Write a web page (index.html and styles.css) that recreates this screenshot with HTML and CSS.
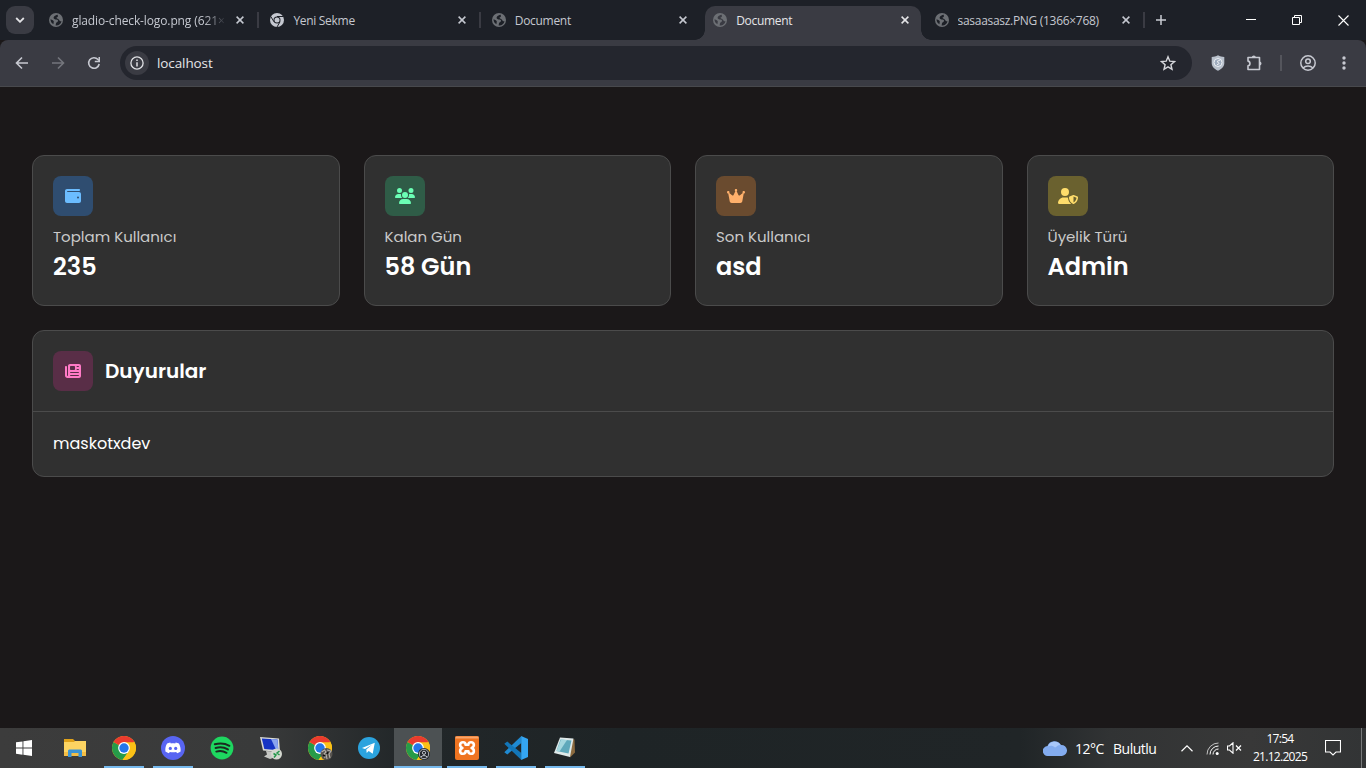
FILE: index.html
```html
<!DOCTYPE html>
<html lang="tr">
<head>
    <meta charset="UTF-8">
    <meta name="viewport" content="width=device-width, initial-scale=1.0">
    <title>Document</title>
    <link rel="stylesheet" href="styles.css">
</head>
<body>
    <svg class="defs" width="0" height="0">
        <symbol id="globe" viewBox="0 0 14 14">
            <circle cx="7" cy="7" r="7" fill="#6c6f74"/>
            <path d="M8.800 1.800C7 2 4.800 3 4.600 4.600c-.2 1.600 1.400 2 2.800 2 1.400.1 1.800.8 1.500 1.700-.3.900-1.500.9-1.900 1.900l-.4 2.200c3 .4 5.400-1.500 5.900-4.200-.9.200-1.900-.1-2.400-1.200-.4-1-1.300-1.200-2-1.500C7 5 7.600 4 8.800 4z" fill="var(--hole)"/>
            <path d="M1.500 6.300l2.300.9c1 .5 1.200 1.200.9 2.100l-.3 1.900C2.500 10.300 1.500 8.500 1.500 6.300z" fill="var(--hole)"/>
        </symbol>
        <symbol id="close" viewBox="0 0 8 8"><path d="M.6.6l6.800 6.800M7.400.6L.6 7.400" stroke="currentColor" stroke-width="1.500"/></symbol>
        <symbol id="chrome" viewBox="0 0 24 24">
            <circle cx="12" cy="12" r="12" fill="#fbc116"/>
            <path d="M12 12L1.600 6A12 12 0 0 0 10.500 23.900L17.200 15z" fill="#269b49"/>
            <path d="M12 12L1.600 6A12 12 0 0 1 22.400 6z" fill="#ea3b2e"/>
            <path d="M12 6.300h10.500A12 12 0 0 1 10.500 23.900l6.400-9z" fill="#fbc116"/>
            <circle cx="12" cy="12" r="5.900" fill="#fff"/>
            <circle cx="12" cy="12" r="4.700" fill="#2476ea"/>
        </symbol>
    </svg>

    <div class="tabs">
        <div class="tab-search"><svg width="10" height="6" viewBox="0 0 10 6"><path d="M1.200 1l3.800 3.800L8.800 1" fill="none" stroke="#e3e3e6" stroke-width="1.800"/></svg></div>
        <div class="tab">
            <svg class="favicon"><use href="#globe"/></svg>
            <span class="tab-title fade">gladio-check-logo.png (621×</span>
            <svg class="close"><use href="#close"/></svg>
        </div>
        <div class="tab">
            <svg class="favicon" viewBox="0 0 14 14"><circle cx="7" cy="7" r="7" fill="#c5c8d0"/><path d="M7 3.500h6.200M4 8.800L.8 3.500M10 8.800L7 14" stroke="#1d2027" stroke-width="1"/><circle cx="7" cy="7" r="3.500" fill="#1d2027"/><circle cx="7" cy="7" r="2.500" fill="#c5c8d0"/></svg>
            <span class="tab-title">Yeni Sekme</span>
            <svg class="close"><use href="#close"/></svg>
        </div>
        <div class="tab no-line">
            <svg class="favicon"><use href="#globe"/></svg>
            <span class="tab-title">Document</span>
            <svg class="close"><use href="#close"/></svg>
        </div>
        <div class="tab active">
            <svg class="favicon"><use href="#globe"/></svg>
            <span class="tab-title">Document</span>
            <svg class="close"><use href="#close"/></svg>
        </div>
        <div class="tab">
            <svg class="favicon"><use href="#globe"/></svg>
            <span class="tab-title">sasaasasz.PNG (1366×768)</span>
            <svg class="close"><use href="#close"/></svg>
        </div>
        <svg class="new-tab" width="10" height="10" viewBox="0 0 10 10"><path d="M5 0v10M0 5h10" stroke="#c9cbd3" stroke-width="1.500"/></svg>
        <div class="window-buttons">
            <svg width="10" height="10" viewBox="0 0 10 10"><path d="M0 4.500h10" stroke="#fff"/></svg>
            <svg width="10" height="10" viewBox="0 0 10 10"><path d="M.5 2.500h7v7h-7zM2.500 2.500v-2h7v7h-2" fill="none" stroke="#fff"/></svg>
            <svg width="11" height="11" viewBox="0 0 11 11"><path d="M.5.5l10 10M10.500.5l-10 10" stroke="#fff" stroke-width="1.100"/></svg>
        </div>
    </div>

    <div class="toolbar">
        <div class="nav">
            <svg width="14" height="14" viewBox="0 0 14 14"><path d="M13 7H2M7 1.500L1.500 7 7 12.500" fill="none" stroke="#c7c9d1" stroke-width="1.600"/></svg>
            <svg width="14" height="14" viewBox="0 0 14 14"><path d="M1 7h11M7 1.500L12.500 7 7 12.500" fill="none" stroke="#74767d" stroke-width="1.600"/></svg>
            <svg width="14" height="14" viewBox="0 0 14 14"><path d="M12.200 8A5.300 5.300 0 1 1 11 3.500l1 1" fill="none" stroke="#c7c9d1" stroke-width="1.600"/><path d="M13 1v5.200H7.800V4.700h3.700V1z" fill="#c7c9d1"/></svg>
        </div>
        <div class="omnibox">
            <div class="site-info"><svg width="14" height="14" viewBox="0 0 14 14"><circle cx="7" cy="7" r="6.100" fill="none" stroke="#dfe0e4" stroke-width="1.300"/><path d="M7 6.200v4.200M7 3.400v1.500" stroke="#dfe0e4" stroke-width="1.500"/></svg></div>
            <span class="url">localhost</span>
            <svg width="16" height="16" viewBox="0 0 16 16"><path d="M8 1.800l1.800 4.400 4.700.4-3.600 3.100 1.100 4.600L8 11.800l-4 2.500 1.100-4.600L1.500 6.600l4.700-.4z" fill="none" stroke="#d6d7dc" stroke-width="1.400"/></svg>
        </div>
        <div class="extensions">
            <svg width="14" height="16" viewBox="0 0 14 16"><path d="M7 .3c2 1 4 1.500 6.300 1.700v6.500C13 12 10 14.300 7 15.700 4 14.300 1 12 .7 8.500V2C3 1.800 5 1.300 7 .3z" fill="#b9c1cc"/><circle cx="7" cy="7.500" r="4" fill="#9eabbd" stroke="#edf0f4"/><path d="M9.500 4.800L6 6.500l2.300 2L6 9.800" fill="none" stroke="#edf0f4"/></svg>
            <svg width="18" height="18" viewBox="0 0 18 18"><path d="M2 3.500h11.500v12H2v-3.600c2.600-.3 2.600-4.400 0-4.800z" fill="none" stroke="#c7c9d1" stroke-width="1.600" stroke-linejoin="round"/><path d="M5.800 3.500a2 2 0 0 1 4 0zM13.500 7.500a2 2 0 0 1 0 4z" fill="#c7c9d1"/></svg>
            <span class="divider"></span>
            <svg width="16" height="16" viewBox="0 0 16 16"><circle cx="8" cy="8" r="7.200" fill="none" stroke="#c7c9d1" stroke-width="1.500"/><circle cx="8" cy="6.300" r="2.300" fill="none" stroke="#c7c9d1" stroke-width="1.500"/><path d="M3 13c2.800-2.800 7.200-2.800 10 0" fill="none" stroke="#c7c9d1" stroke-width="1.500"/></svg>
            <svg width="4" height="14" viewBox="0 0 4 14"><g fill="#c7c9d1"><circle cx="2" cy="2" r="1.700"/><circle cx="2" cy="7" r="1.700"/><circle cx="2" cy="12" r="1.700"/></g></svg>
        </div>
    </div>

    <main class="container">
        <div class="cards">
            <div class="card">
                <div class="icon blue"><svg width="16" height="16" viewBox="0 0 512 512"><path d="M64 32C28.700 32 0 60.700 0 96L0 416c0 35.300 28.700 64 64 64l384 0c35.300 0 64-28.700 64-64l0-224c0-35.300-28.700-64-64-64L80 128c-8.800 0-16-7.200-16-16s7.200-16 16-16l368 0c17.700 0 32-14.300 32-32s-14.300-32-32-32L64 32zM416 272a32 32 0 1 1 0 64 32 32 0 1 1 0-64z"/></svg></div>
                <div class="label">Toplam Kullanıcı</div>
                <div class="value">235</div>
            </div>
            <div class="card">
                <div class="icon green"><svg width="20" height="16" viewBox="0 0 640 512"><path d="M144 0a80 80 0 1 1 0 160A80 80 0 1 1 144 0zM512 0a80 80 0 1 1 0 160A80 80 0 1 1 512 0zM0 298.700C0 239.800 47.800 192 106.700 192l42.700 0c15.900 0 31 3.500 44.600 9.700c-1.300 7.200-1.900 14.700-1.900 22.300c0 38.200 16.800 72.500 43.300 96L21.300 320C9.600 320 0 310.400 0 298.700zM405.300 320c26.600-23.500 43.300-57.800 43.300-96c0-7.600-.7-15-1.900-22.300c13.600-6.300 28.700-9.700 44.600-9.700l42.700 0C592.200 192 640 239.800 640 298.700c0 11.800-9.600 21.300-21.300 21.300l-213.300 0zM224 224a96 96 0 1 1 192 0 96 96 0 1 1 -192 0zM128 485.300C128 411.700 187.700 352 261.300 352l117.300 0C452.300 352 512 411.700 512 485.300c0 14.700-11.900 26.700-26.700 26.700l-330.700 0c-14.700 0-26.700-11.900-26.700-26.700z"/></svg></div>
                <div class="label">Kalan Gün</div>
                <div class="value">58 Gün</div>
            </div>
            <div class="card">
                <div class="icon orange"><svg width="18" height="16" viewBox="0 0 576 512"><path d="M309 106c11.400-7 19-19.700 19-34c0-22.100-17.900-40-40-40s-40 17.900-40 40c0 14.400 7.600 27 19 34L209.700 220.600c-9.100 18.200-32.700 23.400-48.600 10.700L72 160c5-6.700 8-15 8-24c0-22.100-17.900-40-40-40S0 113.900 0 136s17.900 40 40 40c.2 0 .5 0 .7 0L86.400 427.400c5.500 30.400 32 52.600 63 52.600l277.200 0c30.900 0 57.400-22.100 63-52.600L535.300 176c.2 0 .5 0 .7 0c22.100 0 40-17.900 40-40s-17.900-40-40-40s-40 17.900-40 40c0 9 3 17.300 8 24l-89.100 71.300c-15.900 12.700-39.500 7.500-48.600-10.700L309 106z"/></svg></div>
                <div class="label">Son Kullanıcı</div>
                <div class="value">asd</div>
            </div>
            <div class="card">
                <div class="icon yellow"><svg width="20" height="16" viewBox="0 0 640 512"><path d="M224 256A128 128 0 1 0 224 0a128 128 0 1 0 0 256zm-45.700 48C79.800 304 0 383.800 0 482.300C0 498.700 13.300 512 29.700 512l388.600 0c1.800 0 3.500-.2 5.300-.5c-76.300-55.100-99.800-141-103.100-200.200c-16.100-4.800-33.100-7.300-50.700-7.300l-91.400 0zm308.800-78.300l-120 48C358 277.400 352 286.200 352 296c0 63.300 25.900 168.800 134.800 214.200c5.900 2.500 12.600 2.500 18.500 0C614.100 464.800 640 359.300 640 296c0-9.800-6-18.600-15.100-22.300l-120-48c-5.700-2.300-12.100-2.300-17.800 0zM591.400 312c-3.900 50.700-27.200 116.700-95.400 149.700l0-187.800L591.400 312z"/></svg></div>
                <div class="label">Üyelik Türü</div>
                <div class="value">Admin</div>
            </div>
        </div>

        <div class="news">
            <div class="news-header">
                <div class="icon pink"><svg width="16" height="16" viewBox="0 0 512 512"><path d="M96 96c0-35.300 28.700-64 64-64l288 0c35.300 0 64 28.700 64 64l0 320c0 35.300-28.700 64-64 64L80 480c-44.200 0-80-35.800-80-80L0 128c0-17.700 14.300-32 32-32s32 14.300 32 32l0 272c0 8.800 7.200 16 16 16s16-7.200 16-16L96 96zm64 24l0 80c0 13.300 10.700 24 24 24l112 0c13.300 0 24-10.700 24-24l0-80c0-13.300-10.700-24-24-24L184 96c-13.300 0-24 10.700-24 24zm208-8c0 8.800 7.200 16 16 16l48 0c8.800 0 16-7.200 16-16s-7.200-16-16-16l-48 0c-8.800 0-16 7.200-16 16zm0 96c0 8.800 7.200 16 16 16l48 0c8.800 0 16-7.200 16-16s-7.200-16-16-16l-48 0c-8.800 0-16 7.200-16 16zM160 304c0 8.800 7.200 16 16 16l256 0c8.800 0 16-7.200 16-16s-7.200-16-16-16l-256 0c-8.800 0-16 7.200-16 16zm0 96c0 8.800 7.200 16 16 16l256 0c8.800 0 16-7.200 16-16s-7.200-16-16-16l-256 0c-8.800 0-16 7.200-16 16z"/></svg></div>
                <h2>Duyurular</h2>
            </div>
            <div class="news-body">maskotxdev</div>
        </div>
    </main>

    <footer class="taskbar">
        <div class="app start"><svg width="16" height="16" viewBox="0 0 16 16"><path d="M0 2.300L6.500 1.400v6.200H0zM7.400 1.200L16 0v7.600H7.400zM0 8.500h6.500v6.200L0 13.800zM7.400 8.500H16V16l-8.600-1.200z" fill="#fff"/></svg></div>
        <div class="app"><svg width="22" height="20" viewBox="0 0 22 20"><path d="M0 2.500V1h9l2 2h11v15H0z" fill="#e0a21a"/><path d="M0 4h10l1-1h11v15H0z" fill="#fcd462"/><path d="M0 14h22v4H0z" fill="#f3bd45"/><path d="M4 19v-6.500l1-1h12l1 1V19h-3.500v-4h-7v4z" fill="#3b93d3"/></svg></div>
        <div class="app open"><svg width="24" height="24"><use href="#chrome"/></svg></div>
        <div class="app open"><svg width="24" height="24" viewBox="0 0 24 24"><circle cx="12" cy="12" r="12" fill="#5865f2"/><path d="M9.300 6.500c-1.300.2-2.300.6-3.200 1.100C4.600 10 4.100 12.600 4.400 15.600c1.200.9 2.400 1.400 3.500 1.700l.9-1.400c2.100.6 4.300.6 6.400 0l.9 1.400c1.300-.4 2.500-.9 3.500-1.700.3-3.200-.4-5.800-1.700-8-.9-.5-1.900-.9-3.200-1.100l-.5 1c-1.400-.2-3-.2-4.400 0z" fill="#fff"/><circle cx="9.300" cy="12.400" r="1.600" fill="#5865f2"/><circle cx="14.700" cy="12.400" r="1.600" fill="#5865f2"/></svg></div>
        <div class="app"><svg width="24" height="24" viewBox="0 0 24 24"><circle cx="12" cy="12" r="11.400" fill="#1ed760"/><path d="M4.800 8.300c5-1.400 10.400-.9 14.600 1.500M5.600 12c4.200-1.200 8.700-.7 12.300 1.400M6.300 15.600c3.500-1 7.100-.6 10.200 1.200" fill="none" stroke="#1a2a20" stroke-width="2" stroke-linecap="round"/></svg></div>
        <div class="app"><svg width="24" height="24" viewBox="0 0 24 24"><path d="M1 1l19 1.500L21 16 4 14.500z" fill="#d9dad6"/><path d="M2.800 2.400l15.700 1.200.8 10.600L5.300 13z" fill="#1634c4"/><path d="M12 3l6.500.6.800 10.600-2 0z" fill="#8aa4ef"/><path d="M7 15l7 .5v3l3 2.500-6 2-6-2.500 3-2z" fill="#c5c6c3"/><circle cx="17.500" cy="18" r="5.500" fill="#d3d7cf"/><path d="M14.500 17.500l2.500 1.500-2 2.500M20.500 15L18 17l2.500 2" fill="none" stroke="#23964a" stroke-width="1.500"/></svg></div>
        <div class="app"><svg width="25" height="24" viewBox="0 0 25 24"><use href="#chrome" width="24" height="24"/><circle cx="18.500" cy="18" r="6" fill="#57544f"/><path d="M13.500 16l3-2 1.500 2-2 2 1 4M19 14l4 1-2 3 1 4M18 18l1 5" fill="none" stroke="#b5b1aa" stroke-width="1.100"/><path d="M15 19l2 1M20 16l-1 2" stroke="#111" stroke-width="1.500"/></svg></div>
        <div class="app"><svg width="22" height="22" viewBox="0 0 22 22"><circle cx="11" cy="11" r="11" fill="#2ba3de"/><path d="M4 11l12.800-5.200-2.100 11-4-2.900-2 2-.4-3.500 5.700-4.700-7 4.300z" fill="#fff"/></svg></div>
        <div class="app open current"><svg width="24" height="24" viewBox="0 0 24 24"><use href="#chrome" width="24" height="24"/><circle cx="18" cy="18" r="6" fill="#22262b"/><circle cx="18" cy="18" r="4.700" fill="none" stroke="#aeb2b7"/><circle cx="18" cy="16.800" r="1.600" fill="none" stroke="#c7cace"/><path d="M14.800 21c1.500-1.900 4.900-1.900 6.400 0" fill="none" stroke="#c7cace"/></svg></div>
        <div class="app open"><svg width="24" height="24" viewBox="0 0 24 24"><rect width="24" height="24" rx="2" fill="#ef7421"/><rect x=".5" y=".5" width="23" height="2" fill="#f9a66c"/><path d="M8 6.200c2 0 2.600 1.100 2.600 2.500h2.800c0-1.400.8-2.500 2.600-2.500 3.600 0 3.800 4.600.6 5.800 3.200 1.200 3 5.800-.6 5.800-1.800 0-2.600-1.100-2.600-2.500h-2.800c0 1.400-.6 2.500-2.600 2.500-3.600 0-3.800-4.600-.6-5.800C4.200 10.800 4.400 6.200 8 6.200z" fill="none" stroke="#fff" stroke-width="2.600" stroke-linejoin="round"/></svg></div>
        <div class="app open"><svg width="24" height="24" viewBox="0 0 24 24"><path d="M17.400 0v7L3.300 18.400.3 16.200z" fill="#1f8ad2"/><path d="M17.400 24v-7L3.300 5.600.3 7.800z" fill="#1376b8"/><path d="M17.200 0L24 3v18l-6.800 3z" fill="#34a6f3"/></svg></div>
        <div class="app open"><svg width="26" height="24" viewBox="0 0 26 24"><path d="M10 2l12.500 1.500.5 13-5 5z" fill="#8b6a3f"/><path d="M8 1.500l13.500 1L18 21 2 17z" fill="#dfe9e9"/><path d="M8.500 3.500l11 1L16.500 17.500 4.500 15z" fill="#5fa9bb"/><path d="M9 3.500l6 .6-7.500 11.500-3-.6z" fill="#a5d8df"/></svg></div>

        <div class="tray">
            <svg class="weather" width="24" height="16" viewBox="0 0 24 16"><path d="M5 16A5 5 0 0 1 4.500 6 7.500 7.500 0 0 1 18 5a5.500 5.500 0 0 1 1 11z" fill="#83acef"/><path d="M5 6.500A7 7 0 0 1 17.500 5c-3 0-4 2-5.500 2.500-2-2-5-2-7-1z" fill="#a9c8fa"/></svg>
            <span class="degree">12°C</span>
            <span class="condition">Bulutlu</span>
            <svg class="chevron" width="12" height="7" viewBox="0 0 12 7"><path d="M.5 6.300L6 .9l5.500 5.400" fill="none" stroke="#fff" stroke-width="1.200"/></svg>
            <svg class="wifi" width="13" height="13" viewBox="0 0 13 13"><g fill="none" stroke="#fff"><path d="M1 12.500A11.500 11.500 0 0 1 12.500 1" opacity=".7"/><path d="M4 12.500A8.500 8.500 0 0 1 12.500 4"/><path d="M7 12.500A5.500 5.500 0 0 1 12.500 7"/></g><circle cx="11.200" cy="11.500" r="1.500" fill="#fff"/></svg>
            <svg class="speaker" width="16" height="12" viewBox="0 0 16 12"><path d="M.5 4h2L6 .8v10.400L2.500 8h-2z" fill="none" stroke="#fff" stroke-width="1.100"/><path d="M9 3.500l5 5M14 3.500l-5 5" stroke="#fff" stroke-width="1.200"/></svg>
            <div class="clock"><span>17:54</span><span>21.12.2025</span></div>
            <svg class="notice" width="16" height="16" viewBox="0 0 16 16"><path d="M.5.5h15v11.500H11L8 15l-3-3H.5z" fill="none" stroke="#fff" stroke-width="1.100"/></svg>
            <span class="show-desktop"></span>
        </div>
    </footer>
</body>
</html>
```

FILE: styles.css
```css
* {
    box-sizing: border-box;
}
body {
    margin: 0;
    height: 768px;
    overflow: hidden;
    display: flex;
    flex-direction: column;
    background: #1b1819;
    color: #fff;
    font-family: "Segoe UI", "Open Sans", sans-serif;
}
svg {
    display: block;
    flex: none;
}
.defs {
    position: absolute;
}

/* browser tabs */
.tabs {
    --hole: #1d2027;
    height: 40px;
    display: flex;
    align-items: center;
    background: #1d2027;
    font-size: 12px;
    color: #c5c8d0;
}
.tab-search {
    width: 28px;
    height: 28px;
    margin: 0 4px 0 6px;
    border-radius: 9px;
    background: #3a3b43;
    display: flex;
    align-items: center;
    justify-content: center;
}
.tab {
    position: relative;
    width: 221.4px;
    height: 34px;
    margin-top: 6px;
    padding: 0 15px 6px 11px;
    display: flex;
    align-items: center;
}
.tab::after {
    content: "";
    position: absolute;
    right: 0;
    top: 6px;
    width: 2px;
    height: 16px;
    background: #3a3b43;
}
.tab.no-line::after {
    display: none;
}
.tab.active {
    --hole: #3a3b43;
    width: 215.4px;
    margin-left: 3px;
    margin-right: 3px;
    padding: 0 12px 6px 8px;
    border-radius: 10px 10px 0 0;
    background: #3a3b43;
    color: #e5e5e8;
}
/* rounded feet of the active tab */
.tab.active::before,
.tab.active::after {
    content: "";
    position: absolute;
    top: auto;
    bottom: 0;
    width: 10px;
    height: 10px;
    background: radial-gradient(circle at 0 0, #1d2027 9.5px, #3a3b43 10px);
}
.tab.active::before {
    left: -10px;
}
.tab.active::after {
    right: -10px;
    transform: scaleX(-1);
}
.favicon {
    width: 14px;
    height: 14px;
    margin-right: 9px;
}
.tab-title {
    flex: 1;
    overflow: hidden;
    white-space: nowrap;
    letter-spacing: -0.3px;
}
.tab-title.fade {
    margin-right: 10px;
    letter-spacing: -0.12px;
    -webkit-mask-image: linear-gradient(to right, #000 132px, transparent 155px);
    mask-image: linear-gradient(to right, #000 132px, transparent 155px);
}
.close {
    width: 8px;
    height: 8px;
}
.new-tab {
    margin-left: 11px;
}
.window-buttons {
    display: flex;
    align-items: center;
    margin-left: auto;
    gap: 36px;
    padding-right: 17px;
}

/* address bar */
.toolbar {
    height: 47px;
    padding-bottom: 1px;
    display: flex;
    align-items: center;
    background: #3a3b43;
    border-bottom: 1px solid #48494d;
    border-radius: 8px 8px 0 0;
}
.nav {
    display: flex;
    gap: 22px;
    padding: 0 19px 0 15px;
}
.omnibox {
    width: 1072px;
    height: 34px;
    padding: 0 16px 0 5px;
    border-radius: 17px;
    display: flex;
    align-items: center;
    background: #24262e;
}
.site-info {
    width: 24px;
    height: 24px;
    border-radius: 50%;
    background: #3a3b43;
    display: flex;
    align-items: center;
    justify-content: center;
}
.url {
    flex: 1;
    margin-left: 8px;
    font-size: 13.5px;
    letter-spacing: -0.1px;
    color: #e5e5e8;
}
.extensions {
    display: flex;
    align-items: center;
    padding-left: 19px;
}
.extensions svg:nth-child(2) {
    margin-left: 21px;
}
.divider {
    width: 2px;
    height: 16px;
    margin: 0 18px 0 16px;
    background: #54555c;
}
.extensions svg:last-child {
    margin-left: 26px;
}

/* dashboard */
.container {
    flex: 1;
    padding: 68px 32px 0;
    font-family: "Poppins", "Inter", sans-serif;
}
.cards {
    display: grid;
    grid-template-columns: repeat(4, 1fr);
    gap: 24px;
    margin-bottom: 24px;
}
.card {
    height: 151px;
    padding: 20px;
    background: #303030;
    border: 1px solid #4b4b4b;
    border-radius: 12px;
}
.icon {
    width: 40px;
    height: 40px;
    border-radius: 8px;
    display: flex;
    align-items: center;
    justify-content: center;
}
.icon svg {
    fill: currentColor;
}
.blue {
    background: #2f4d70;
    color: #6bbcff;
}
.green {
    background: #2f5c47;
    color: #6bffb5;
}
.orange {
    background: #6a4b2f;
    color: #ffb06b;
}
.yellow {
    background: #6a612f;
    color: #ffdd6b;
}
.pink {
    background: #592e47;
    color: #ff7ac6;
}
.label {
    margin-top: 9px;
    font-size: 15px;
    line-height: 24px;
    color: #cacaca;
}
.value {
    font-size: 24px;
    font-weight: 600;
    line-height: 36px;
}
.news {
    background: #303030;
    border: 1px solid #4b4b4b;
    border-radius: 12px;
}
.news-header {
    display: flex;
    align-items: center;
    gap: 12px;
    padding: 20px;
    border-bottom: 1px solid #4b4b4b;
}
h2 {
    margin: 0;
    font-size: 20px;
    font-weight: 600;
}
.news-body {
    padding: 20px;
    font-size: 16px;
    line-height: 24px;
}

/* windows taskbar */
.taskbar {
    height: 40px;
    display: flex;
    background: linear-gradient(to right, #3c3c3c 0, #393a3a 260px, #222729 400px, #1e2426 620px, #202527 1020px, #313334 1110px, #383838 1250px, #323435 100%);
}
.app {
    position: relative;
    width: 48px;
    margin-right: 1px;
    display: flex;
    align-items: center;
    justify-content: center;
}
.app.start {
    margin-right: 3px;
}
.app.open::after {
    content: "";
    position: absolute;
    left: 4px;
    right: 4px;
    bottom: 0;
    height: 2px;
    background: #76b9ed;
}
.app.current {
    background: #4c5153;
}
.app.current::after {
    left: 0;
    right: 0;
}
.tray {
    margin-left: auto;
    display: flex;
    align-items: center;
    font-size: 14px;
}
.degree {
    width: 29px;
    margin-left: 8px;
}
.condition {
    width: 44px;
    margin-left: 9px;
}
.degree,
.condition {
    letter-spacing: -0.5px;
    white-space: nowrap;
}
.chevron {
    margin-left: 24px;
}
.wifi {
    margin-left: 13px;
}
.speaker {
    margin-left: 8px;
}
.clock {
    width: 56px;
    margin-left: 9px;
    display: flex;
    flex-direction: column;
    align-items: center;
    font-size: 12px;
    line-height: 18px;
    letter-spacing: -0.7px;
    white-space: nowrap;
}
.notice {
    margin-left: 17px;
}
.show-desktop {
    width: 5px;
    height: 40px;
    margin-left: 20px;
    border-left: 1px solid #77797a;
}
```
